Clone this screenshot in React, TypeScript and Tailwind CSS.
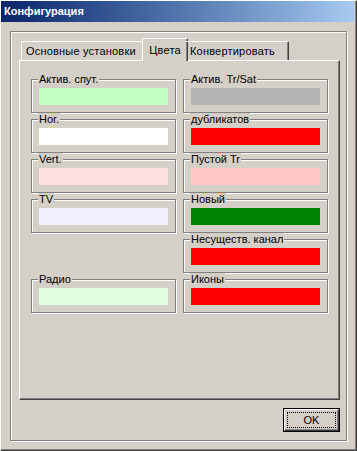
import React from "react";

type Item = { label: string; color: string } | null;

const items: Item[] = [
  { label: "Актив. спут.", color: "bg-[#c0ffc0]" },
  { label: "Актив. Tr/Sat", color: "bg-[#b4b4b4]" },
  { label: "Hor.", color: "bg-white" },
  { label: "дубликатов", color: "bg-[#ff0000]" },
  { label: "Vert.", color: "bg-[#ffe0e0]" },
  { label: "Пустой Tr", color: "bg-[#ffc8c8]" },
  { label: "TV", color: "bg-[#f0f0ff]" },
  { label: "Новый", color: "bg-[#008000]" },
  null,
  { label: "Несуществ. канал", color: "bg-[#ff0000]" },
  { label: "Радио", color: "bg-[#e0ffe0]" },
  { label: "Иконы", color: "bg-[#ff0000]" },
];

const ColorBox = ({ label, color }: { label: string; color: string }) => (
  <div className="relative h-[34px] w-[145px] border border-[#808080] shadow-[inset_1px_1px_0_#fff,1px_1px_0_#fff]">
    <span className="absolute -top-[7px] left-[6px] bg-[#d4d0c8] px-[1px] text-[11px] leading-[13px] text-black">
      {label}
    </span>
    <div className={`ml-[7px] mt-[8px] h-[17px] w-[129px] ${color}`} />
  </div>
);

export default function App() {
  return (
    <div className="h-[451px] w-[357px] bg-[#d4d0c8] font-['Liberation_Sans',Arial,sans-serif] text-[11px] text-black">
      <div className="flex h-full flex-col border-l border-t border-white border-r-[#404040] border-b-[#404040] border-r border-b">
        <div className="flex h-full flex-col border-r border-b border-[#808080] pr-[1px]">
          {/* title bar */}
          <div className="flex h-[21px] items-center bg-gradient-to-r from-[#0a246a] to-[#a6caf0] pl-[3px]">
            <span className="text-[11px] font-bold text-white">Конфигурация</span>
          </div>

          {/* frame */}
          <div className="ml-[9px] mt-[9px] flex h-[410px] w-[337px] flex-col border border-[#808080] pl-[8px] pt-[6px] shadow-[inset_1px_1px_0_#fff,1px_1px_0_#fff]">
            {/* tabs */}
            <div className="relative z-10 flex h-[22px] items-end pl-[2px] tracking-[0.2px]">
              <div className="flex h-[19px] w-[123px] items-center rounded-tl-[2px] border-l border-t border-white pl-[4px] pt-[1px]">
                Основные установки
              </div>
              <div className="-mx-[2px] -mb-[1px] flex h-[23px] w-[46px] items-start justify-center rounded-t-[2px] border-l border-t border-r border-white border-r-[#404040] bg-[#d4d0c8] pt-[3px] shadow-[inset_-1px_0_0_#808080]">
                Цвета
              </div>
              <div className="flex h-[19px] w-[103px] items-center rounded-tr-[2px] border-t border-r border-white border-r-[#404040] pl-[4px] pt-[1px] shadow-[inset_-1px_0_0_#808080]">
                Конвертировать
              </div>
            </div>

            {/* panel */}
            <div className="h-[340px] w-[321px] border border-white border-r-[#404040] border-b-[#404040] pl-[11px] pt-[18px] shadow-[inset_-1px_-1px_0_#808080]">
              <div className="grid grid-cols-[145px_145px] gap-x-[7px] gap-y-[6px]">
                {items.map((it, i) =>
                  it ? <ColorBox key={i} label={it.label} color={it.color} /> : <div key={i} className="h-[34px]" />
                )}
              </div>
            </div>

            {/* button */}
            <div className="mt-[8px] flex w-[321px] justify-end">
              <div className="h-[24px] w-[57px] border border-black">
                <div className="h-full border border-white border-r-[#404040] border-b-[#404040] p-[2px] shadow-[inset_-1px_-1px_0_#808080]">
                  <div className="flex h-full items-center justify-center border border-dotted border-black">
                    OK
                  </div>
                </div>
              </div>
            </div>
          </div>
        </div>
      </div>
    </div>
  );
}
